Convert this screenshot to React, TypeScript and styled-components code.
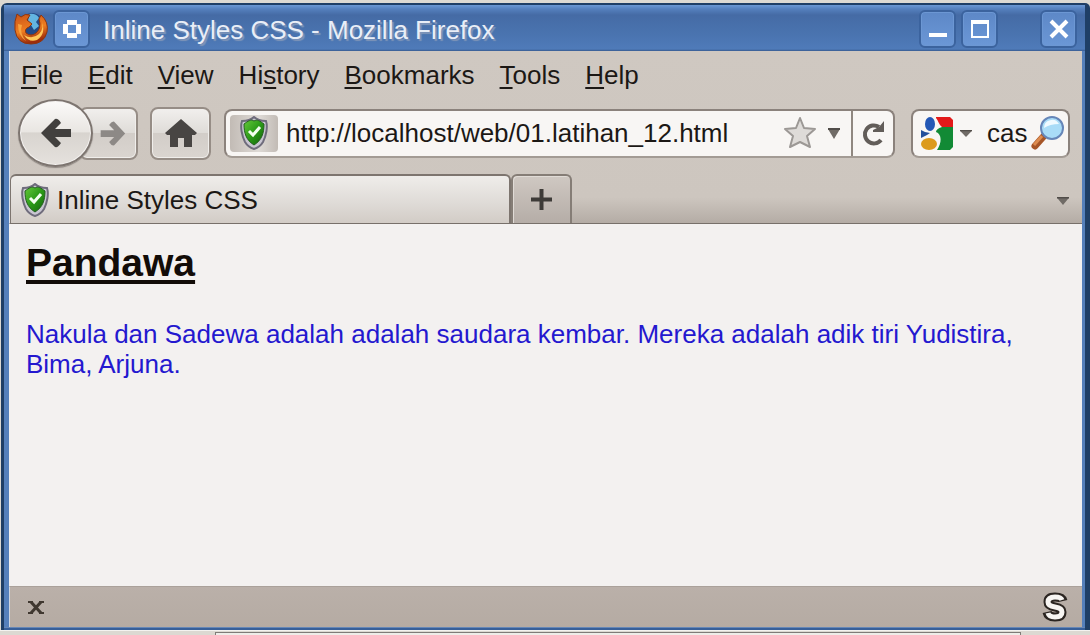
import React from "react";
import styled, { createGlobalStyle } from "styled-components";

const Global = createGlobalStyle`
  * { box-sizing: border-box; }
  html { height: 100%; }
  body { margin: 0; background: #dcd9d2; }
  button, input { font: inherit; color: inherit; border: 0; padding: 0; background: none; }
  button { cursor: pointer; }
`;

const Desktop = styled.div`
  min-height: 100vh;
  display: flex;
  flex-direction: column;
  padding-top: 3px;
  font-family: "Liberation Sans", Arial, sans-serif;
  font-size: 26px;
  line-height: 30px;
  color: #1c1815;
`;

const Window = styled.div`
  flex: 1;
  display: flex;
  flex-direction: column;
  margin-left: 1px;
  border: solid #1f3f66;
  border-width: 2px 5px 0 3px;
  border-radius: 6px 5px 0 0;
  background: #5580bb;
  padding: 0 3px 0 5px;
`;

const TitleBar = styled.header`
  display: flex;
  align-items: center;
  height: 46px;
  padding: 2px 8px 0 10px;
  gap: 5px;
  margin: 0 -3px 0 -5px;
  background: linear-gradient(#6b98d4 0, #5580bd 4px, #456ba5 10px, #4a74b0 30px, #4f7bb9 44px, #375b91 46px);
`;

const Title = styled.h1`
  flex: 1;
  margin: 2px 0 0 8px;
  font-size: 26px;
  font-weight: 400;
  color: #e9eef7;
  text-shadow: 2px 2px 1px #7f95b8;
`;

const WindowButton = styled.button<{ $apart?: boolean }>`
  display: flex;
  align-items: center;
  justify-content: center;
  width: 37px;
  height: 38px;
  margin-left: ${(p) => (p.$apart ? "37px" : "0")};
  border: 2px solid #3b639e;
  border-radius: 6px;
  background: linear-gradient(#5d88c7, #6b97d6);
  box-shadow: inset 0 0 0 1px #6c97d3;
`;

const Chrome = styled.div`
  background: linear-gradient(#cfc8c1, #cdc6bf 85%, #b4aca5);
  border-left: 1px solid #dfe4ec;
  border-bottom: 1px solid #77706a;
`;

const MenuBar = styled.nav`
  display: flex;
  gap: 25px;
  height: 49px;
  align-items: center;
  padding: 0 0 2px 11px;
  u { text-decoration-thickness: 2px; text-underline-offset: 3px; text-decoration-skip-ink: none; }
`;

const Toolbar = styled.div`
  display: flex;
  align-items: center;
  height: 66px;
  padding: 0 12px 0 8px;
`;

const ToolButton = styled.button<{ $forward?: boolean }>`
  display: flex;
  align-items: center;
  justify-content: center;
  flex: none;
  width: ${(p) => (p.$forward ? "59px" : "61px")};
  height: 53px;
  margin-left: ${(p) => (p.$forward ? "-14px" : "12px")};
  padding-left: ${(p) => (p.$forward ? "7px" : "0")};
  border: 2px solid #968d86;
  border-radius: 8px;
  background: linear-gradient(#f1efed, #dfdcd8 48%, #d2cdc8 50%, #dad5d0);
  box-shadow: inset 0 0 0 1px #f0eeeb;
`;

const BackButton = styled(ToolButton)`
  position: relative;
  width: 75px;
  height: 68px;
  margin: 0;
  border-color: #7d7570;
  border-radius: 50%;
  background: linear-gradient(#fbfaf9, #e9e6e2 48%, #d8d4cf 50%, #e5e1dd);
  box-shadow: inset 0 0 0 1px #f5f3f1, 0 1px 1px #8d8680;
`;

const Field = styled.div<{ $search?: boolean }>`
  display: flex;
  align-items: center;
  flex: ${(p) => (p.$search ? "none" : "1")};
  width: ${(p) => (p.$search ? "159px" : "auto")};
  min-width: 0;
  height: 49px;
  margin-left: ${(p) => (p.$search ? "16px" : "13px")};
  padding: ${(p) => (p.$search ? "0 4px 0 7px" : "0 0 0 4px")};
  border: 2px solid #8b827c;
  border-bottom-color: #a39b94;
  border-radius: 8px;
  background: #f8f6f4;
  overflow: hidden;
`;

const SiteBadge = styled.button`
  display: flex;
  align-items: center;
  justify-content: center;
  width: 48px;
  height: 37px;
  border-radius: 4px;
  background: linear-gradient(90deg, #c2bbb5, #dedad6 60%, #c2bbb5);
`;

const TextBox = styled.input`
  flex: 1;
  width: 0;
  min-width: 0;
  height: 40px;
  margin-left: 8px;
  outline: 0;
`;

const IconButton = styled.button<{ $w: number; $line?: boolean }>`
  display: flex;
  align-items: center;
  justify-content: center;
  flex: none;
  width: ${(p) => p.$w}px;
  height: 45px;
  border-left: ${(p) => (p.$line ? "2px solid #8f8780" : "0")};
`;

const TabStrip = styled.div`
  display: flex;
  align-items: flex-end;
  height: 57px;
  padding-right: 8px;
`;

const Tab = styled.button`
  display: flex;
  align-items: center;
  gap: 8px;
  flex: 0 1 501px;
  height: 49px;
  padding-left: 10px;
  border: solid #7d756f;
  border-width: 2px 2px 0 1px;
  border-radius: 6px 6px 0 0;
  background: linear-gradient(#efedea, #dedad6 60%, #d2ccc6);
`;

const NewTab = styled.button`
  display: flex;
  align-items: center;
  justify-content: center;
  width: 61px;
  height: 49px;
  border: solid #857d76;
  border-width: 2px 2px 0 2px;
  border-radius: 6px 6px 0 0;
  background: linear-gradient(#cfc8c2, #b5ada7);
  box-shadow: inset 1px 1px 0 #e0dbd6;
`;

const Spacer = styled.div`
  flex: 1;
`;

const Page = styled.main`
  flex: 1;
  padding: 15px 56px 16px 17px;
  background: #f3f1f0;
`;

const Heading = styled.h2`
  margin: 0;
  font-size: 39px;
  line-height: 48px;
  color: #120c08;
  text-decoration: underline;
  text-decoration-thickness: 4px;
  text-underline-offset: 4px;
  text-decoration-skip-ink: none;
`;

const Paragraph = styled.p`
  margin: 32px 0 0;
  color: #2418cf;
`;

const StatusBar = styled.footer`
  display: flex;
  align-items: center;
  justify-content: space-between;
  height: 41px;
  padding: 0 10px 0 12px;
  border-top: 1px solid #aaa19a;
  border-left: 1px solid #cfd6e0;
  background: linear-gradient(#bab0a9, #b5aba3);
`;

const WindowEdge = styled.div`
  height: 3px;
  margin: 0 -3px 0 -5px;
  background: linear-gradient(#7d9bc4, #375f99 50%);
`;

const Below = styled.div`
  display: flex;
  height: 5px;
  border-top: 1px solid #f4f3f0;
  padding: 1px 69px 0 215px;
`;

const BelowPanel = styled.div`
  flex: 1;
  border: solid #7f7c78;
  border-width: 1px 1px 0;
  background: #eeede9;
`;

const menus: [string, string, string][] = [
  ["", "F", "ile"],
  ["", "E", "dit"],
  ["", "V", "iew"],
  ["Hi", "s", "tory"],
  ["", "B", "ookmarks"],
  ["", "T", "ools"],
  ["", "H", "elp"],
];

const Shield = () => (
  <svg width="28" height="34" viewBox="0 0 28 34" aria-hidden="true">
    <defs>
      <linearGradient id="leaf" x1="0" y1="0" x2="1" y2="1">
        <stop offset="0" stopColor="#64c83a" />
        <stop offset=".5" stopColor="#2b9a18" />
        <stop offset="1" stopColor="#12630b" />
      </linearGradient>
    </defs>
    <path d="M14 1C11 4 6 5 2 5C0 11 2 20 5 26Q8 31 14 33Q20 31 23 26C26 20 28 11 26 5C22 5 17 4 14 1Z" fill="#c9c6d2" stroke="#6f6c7c" strokeWidth="2" />
    <path d="M14 5C11 3 8 5 4 8C4 17 6 24 14 29C22 24 24 17 24 8C20 5 17 3 14 5Z" fill="url(#leaf)" stroke="#245f20" />
    <path d="M9 15L13 19L20 11" fill="none" stroke="#f3fff0" strokeWidth="3" />
  </svg>
);

const Down = ({ w = 12, h = 11 }: { w?: number; h?: number }) => (
  <svg width={w} height={h} viewBox="0 0 12 11" preserveAspectRatio="none" aria-hidden="true">
    <path d="M0 1H12L6 11Z" fill="#706b66" />
    <path d="M0 1H12" stroke="#514d49" strokeWidth="2" />
  </svg>
);

const Arrow = ({ color, size, flip }: { color: string; size: number; flip?: boolean }) => (
  <svg width={size} height={size} viewBox="0 0 32 32" aria-hidden="true">
    <path
      d={flip ? "M31 16L18 2Q15 1 12 6L18 12H2V20H18L12 26Q15 31 18 30Z" : "M1 16L15 2Q18 1 21 6L15 12H31V20H15L21 26Q18 31 15 30Z"}
      fill={color}
    />
  </svg>
);

const Firefox = () => (
  <svg width="34" height="34" viewBox="0 0 34 34" aria-hidden="true">
    <defs>
      <linearGradient id="fox" x1="0" y1="0" x2=".3" y2="1">
        <stop offset="0" stopColor="#c9541a" />
        <stop offset=".6" stopColor="#ee7d20" />
        <stop offset="1" stopColor="#9c2c0b" />
      </linearGradient>
    </defs>
    <circle cx="18" cy="13" r="12" fill="#234a87" />
    <path d="M15 2Q22 1 25 6L22 10L25 14L20 18L17 13L14 9Z" fill="#63b5e2" />
    <path d="M3 2L7 5Q11 1 16 3L13 8L18 12L15 15Q10 17 12 21Q17 25 22 21Q28 16 25 7L27 3Q35 10 33 20Q30 32 17 32Q3 32 1 18Q0 9 3 2Z" fill="url(#fox)" stroke="#8d3510" />
    <path d="M27 6Q31 16 25 22Q18 28 10 23Q15 31 23 28Q33 22 27 6Z" fill="#ffc85a" />
    <path d="M4 12Q4 24 12 29Q5 21 8 13Z" fill="#f7a33f" />
  </svg>
);

export default function App() {
  return (
    <>
      <Global />
      <Desktop>
        <Window>
          <TitleBar>
            <Firefox />
            <WindowButton aria-label="Window menu">
              <svg width="20" height="20" viewBox="0 0 20 20">
                <path d="M5 1H15V5H19V15H15V19H5V15H1V5H5ZM6 6V14H14V6Z" fill="#fff" fillRule="evenodd" />
              </svg>
            </WindowButton>
            <Title>Inline Styles CSS - Mozilla Firefox</Title>
            <WindowButton aria-label="Minimize">
              <svg width="20" height="20"><path d="M1 16H19" stroke="#fff" strokeWidth="4" /></svg>
            </WindowButton>
            <WindowButton aria-label="Maximize">
              <svg width="20" height="20"><path d="M2 3H18V18H2Z" fill="none" stroke="#fff" strokeWidth="2" /><path d="M1 3H19" stroke="#fff" strokeWidth="4" /></svg>
            </WindowButton>
            <WindowButton aria-label="Close" $apart>
              <svg width="20" height="20"><path d="M2 2L18 18M18 2L2 18" stroke="#fff" strokeWidth="4" /></svg>
            </WindowButton>
          </TitleBar>

          <Chrome>
            <MenuBar>
              {menus.map(([a, key, b]) => (
                <button key={a + key + b}>{a}<u>{key}</u>{b}</button>
              ))}
            </MenuBar>
            <Toolbar>
              <BackButton aria-label="Back"><Arrow color="#42403e" size={32} /></BackButton>
              <ToolButton aria-label="Forward" $forward><Arrow color="#8d8986" size={27} flip /></ToolButton>
              <ToolButton aria-label="Home">
                <svg width="32" height="28" viewBox="0 0 32 28">
                  <path d="M16 0L32 14L30 16H27V28H19V19H13V28H5V16H2L0 14Z" fill="#484543" />
                </svg>
              </ToolButton>
              <Field>
                <SiteBadge aria-label="Site identity"><Shield /></SiteBadge>
                <TextBox aria-label="Address" defaultValue="http://localhost/web/01.latihan_12.html" />
                <IconButton $w={34} aria-label="Bookmark this page">
                  <svg width="34" height="34" viewBox="0 0 34 34">
                    <path d="M17 2L21 12L32 13L24 20L27 31L17 26L7 31L10 20L2 13L13 12Z" fill="#dedbd8" stroke="#9c9895" strokeWidth="2" strokeLinejoin="round" />
                  </svg>
                </IconButton>
                <IconButton $w={34} aria-label="Show history"><Down /></IconButton>
                <IconButton $w={42} $line aria-label="Reload">
                  <svg width="24" height="26" viewBox="0 0 24 26">
                    <path d="M20 20A9 9 0 1 1 18 7" fill="none" stroke="#625d59" strokeWidth="4" />
                    <path d="M23 1V12H12V10L18 7Z" fill="#625d59" />
                  </svg>
                </IconButton>
              </Field>
              <Field $search>
                <IconButton $w={33} aria-label="Google">
                  <svg width="33" height="34" viewBox="0 0 33 34">
                    <path d="M16 1H30L33 4V11H16Z" fill="#e31919" />
                    <path d="M16 11H33V31L30 34H16Z" fill="#128a35" />
                    <path d="M14 0C19 4 18 8 22 11Q16 13 16 16C22 18 22 27 17 34H2V0Z" fill="#f8f6f4" />
                    <ellipse cx="10" cy="8" rx="5" ry="7" fill="#2357b5" />
                    <path d="M1 14L5 16L10 17L7 19L1 22Z" fill="#234f9c" />
                    <ellipse cx="9" cy="28" rx="8" ry="6" fill="#dc9a1c" />
                  </svg>
                </IconButton>
                <IconButton $w={26} aria-label="Choose search engine"><Down h={7} /></IconButton>
                <TextBox aria-label="Search" defaultValue="cas" />
                <IconButton $w={34} aria-label="Search">
                  <svg width="34" height="36" viewBox="0 0 34 36">
                    <path d="M5 31L13 22" stroke="#a65527" strokeWidth="7" strokeLinecap="round" />
                    <path d="M4 30L12 21" stroke="#dd8c50" strokeWidth="3" />
                    <circle cx="22" cy="13" r="11" fill="#a9dcf7" stroke="#6686b8" strokeWidth="2" />
                    <path d="M14 13A8 8 0 0 1 29 9Q20 9 14 13Z" fill="#effaff" />
                  </svg>
                </IconButton>
              </Field>
            </Toolbar>
            <TabStrip>
              <Tab><Shield />Inline Styles CSS</Tab>
              <NewTab aria-label="New tab">
                <svg width="21" height="21"><path d="M0 10.5H21M10.5 0V21" stroke="#3e3b38" strokeWidth="4" /></svg>
              </NewTab>
              <Spacer />
              <IconButton $w={22} aria-label="List all tabs"><Down h={8} /></IconButton>
            </TabStrip>
          </Chrome>

          <Page>
            <Heading>Pandawa</Heading>
            <Paragraph>
              Nakula dan Sadewa adalah adalah saudara kembar. Mereka adalah adik tiri Yudistira, Bima, Arjuna.
            </Paragraph>
          </Page>
          <StatusBar>
            <IconButton $w={28} aria-label="Close status bar">
              <svg width="16" height="13"><path d="M3 1L13 12M13 1L3 12" stroke="#403830" strokeWidth="3" /><path d="M0 1H5M11 1H16M0 12H5M11 12H16" stroke="#403830" strokeWidth="2" /></svg>
            </IconButton>
            <IconButton $w={34} aria-label="NoScript options">
              <svg width="26" height="30" viewBox="0 0 26 30">
                <path d="M21 9Q20 5 13 5Q6 5 6 10Q6 14 13 15Q20 16 20 20Q20 25 13 25Q6 25 5 20" fill="none" stroke="#2b2521" strokeWidth="9" />
                <path d="M20 8Q19 5 13 5Q6 5 6 10Q6 14 13 15Q20 16 20 20Q20 25 13 25Q7 25 6 21" fill="none" stroke="#f7f5f2" strokeWidth="5" />
              </svg>
            </IconButton>
          </StatusBar>
          <WindowEdge />
        </Window>
        <Below><BelowPanel /></Below>
      </Desktop>
    </>
  );
}
